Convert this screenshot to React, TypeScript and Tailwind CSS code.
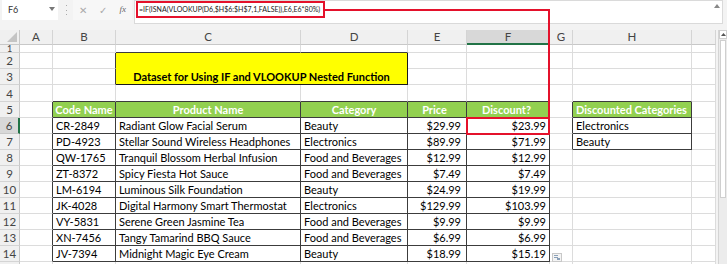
import React from "react";

const COLS = ["A", "B", "C", "D", "E", "F", "G", "H", ""];
// indices: 0=A .. 8=I
const B = 1, C = 2, D = 3, E = 4, F = 5, H = 7;

type Row = { code: string; name: string; cat: string; price: string; disc: string };
const DATA: Row[] = [
  { code: "CR-2849", name: "Radiant Glow Facial Serum", cat: "Beauty", price: "$29.99", disc: "$23.99" },
  { code: "PD-4923", name: "Stellar Sound Wireless Headphones", cat: "Electronics", price: "$89.99", disc: "$71.99" },
  { code: "QW-1765", name: "Tranquil Blossom Herbal Infusion", cat: "Food and Beverages", price: "$12.99", disc: "$12.99" },
  { code: "ZT-8372", name: "Spicy Fiesta Hot Sauce", cat: "Food and Beverages", price: "$7.49", disc: "$7.49" },
  { code: "LM-6194", name: "Luminous Silk Foundation", cat: "Beauty", price: "$24.99", disc: "$19.99" },
  { code: "JK-4028", name: "Digital Harmony Smart Thermostat", cat: "Electronics", price: "$129.99", disc: "$103.99" },
  { code: "VY-5831", name: "Serene Green Jasmine Tea", cat: "Food and Beverages", price: "$9.99", disc: "$9.99" },
  { code: "XN-7456", name: "Tangy Tamarind BBQ Sauce", cat: "Food and Beverages", price: "$6.99", disc: "$6.99" },
  { code: "JV-7394", name: "Midnight Magic Eye Cream", cat: "Beauty", price: "$18.99", disc: "$15.19" },
];

function inT(r: number, c: number) {
  if (r >= 5 && r <= 14 && c >= B && c <= F) return true;
  if (r >= 5 && r <= 7 && c === H) return true;
  if (r >= 2 && r <= 3 && c >= C && c <= D) return true;
  return false;
}

function cellContent(r: number, c: number): { text: string; align: "l" | "c" | "r"; head?: boolean } | null {
  if (r === 5) {
    const h: Record<number, string> = { 1: "Code Name", 2: "Product Name", 3: "Category", 4: "Price", 5: "Discount?", 7: "Discounted Categories" };
    if (h[c] !== undefined) return { text: h[c], align: c === H ? "l" : "c", head: true };
    return null;
  }
  if (r >= 6 && r <= 14) {
    const d = DATA[r - 6];
    if (c === B) return { text: d.code, align: "l" };
    if (c === C) return { text: d.name, align: "l" };
    if (c === D) return { text: d.cat, align: "l" };
    if (c === E) return { text: d.price, align: "r" };
    if (c === F) return { text: d.disc, align: "r" };
    if (c === H && r === 6) return { text: "Electronics", align: "l" };
    if (c === H && r === 7) return { text: "Beauty", align: "l" };
  }
  return null;
}

function Cell({ r, c }: { r: number; c: number }) {
  const rd = inT(r, c) || inT(r, c + 1);
  const bd = inT(r, c) || inT(r + 1, c);
  const content = cellContent(r, c);
  const green = r === 5 && inT(r, c);
  const last = r === 15;
  return (
    <div
      className={[
        "flex items-end overflow-visible whitespace-nowrap border-r",
        last ? "border-b-0" : "border-b",
        rd ? "border-r-[#3c3c3c]" : "border-r-[#dcdcdc]",
        bd ? "border-b-[#3c3c3c]" : "border-b-[#dcdcdc]",
        green ? "bg-[#92d050]" : "bg-white",
        content?.align === "r" ? "justify-end" : content?.align === "c" ? "justify-center" : "justify-start",
        c === F ? "pr-[3px]" : c === E ? "pr-[5px]" : "",
        content?.align === "l" ? "pl-[3px]" : "",
      ].join(" ")}
    >
      {content && (
        <span
          className={
            content.head
              ? "text-[11px] leading-[15px] font-bold text-white"
              : "text-[11px] leading-[15px] text-black"
          }
        >
          {content.text}
        </span>
      )}
    </div>
  );
}

export default function App() {
  const rows = [1, 2, 3, 4, 5, 6, 7, 8, 9, 10, 11, 12, 13, 14, 15];
  const cells: React.ReactNode[] = [];

  // header row
  cells.push(
    <div key="corner" className="relative border-r border-b border-r-[#c8c8c8] border-b-[#c8c8c8] bg-[#f0f0f0]">
      <svg className="absolute right-[2px] bottom-[2px]" width="10" height="10" viewBox="0 0 10 10">
        <polygon points="10,0 10,10 0,10" fill="#c4c4c4" />
      </svg>
    </div>
  );
  COLS.forEach((l, i) => {
    const sel = i === F;
    cells.push(
      <div
        key={"h" + i}
        className={[
          "flex items-center justify-center border-r text-[11.5px] text-[#444]",
          sel
            ? "bg-[#d8d8d8] border-b-2 border-b-[#217346] border-r-[#c8c8c8]"
            : "bg-[#f0f0f0] border-b border-b-[#c8c8c8] border-r-[#d4d4d4]",
        ].join(" ")}
      >
        {l}
      </div>
    );
  });

  rows.forEach((r) => {
    const sel = r === 6;
    cells.push(
      <div
        key={"rh" + r}
        className={[
          "flex justify-center text-[11.5px] text-[#444] overflow-hidden",
          r === 1 ? "items-start" : "items-end",
          r === 15 ? "" : "border-b",
          sel
            ? "bg-[#d8d8d8] border-r-2 border-r-[#217346] border-b-[#c8c8c8]"
            : "bg-[#f0f0f0] border-r border-r-[#c8c8c8] border-b-[#d4d4d4]",
        ].join(" ")}
      >
        {r === 1 ? (
          <span className="block h-[7px] overflow-hidden text-[9px] leading-[7px]">1</span>
        ) : r === 15 ? (
          ""
        ) : (
          <span className="leading-[15px]">{r}</span>
        )}
      </div>
    );
    for (let c = 0; c < 9; c++) {
      if (r >= 2 && r <= 3 && c >= C && c <= D) {
        if (r === 2 && c === C) {
          cells.push(
            <div
              key="title"
              className="col-start-4 col-span-2 row-start-3 row-span-2 flex items-end justify-center border-r border-b border-r-[#1a1a1a] border-b-[#1a1a1a] bg-[#ffff00]"
            >
              <span className="text-[11px] leading-[15px] font-bold text-black">
                Dataset for Using IF and VLOOKUP Nested Function
              </span>
            </div>
          );
        }
        continue;
      }
      cells.push(<Cell key={r + "-" + c} r={r} c={c} />);
    }
  });

  return (
    <div
      className="relative w-[727px] h-[264px] overflow-hidden bg-[#f3f3f3]"
      style={{ fontFamily: "Lato, 'Noto Sans', sans-serif" }}
    >
      {/* formula bar */}
      <div className="flex h-[30px] items-start">
        <div className="relative ml-[2px] mt-0 flex h-[20px] w-[56px] items-center bg-white pl-[6px] text-[9px] text-[#333]">
          F6
          <svg className="absolute right-[3px] top-[7px]" width="6" height="4" viewBox="0 0 6 4">
            <polygon points="0,0 6,0 3,4" fill="#777" />
          </svg>
        </div>
        <div className="ml-[8px] mt-[5px] flex h-[10px] flex-col justify-between">
          <span className="block h-[1px] w-[1px] bg-[#aaa]" />
          <span className="block h-[1px] w-[1px] bg-[#aaa]" />
          <span className="block h-[1px] w-[1px] bg-[#aaa]" />
        </div>
        <div className="ml-[6px] flex h-[20px] w-[59px] items-center justify-around bg-[#f7f7f7] text-[10px] text-[#aaa]">
          <span>✕</span>
          <span>✓</span>
          <span className="italic text-[#666] text-[9px]" style={{ fontFamily: "'Liberation Serif', serif" }}>fx</span>
        </div>
        <div className="relative ml-[2px] h-[24px] w-[589px] border border-[#dadada] bg-white">
          <div className="absolute left-[1px] top-0 flex h-[17px] w-[189px] items-center border-2 border-[#e4112b] pl-[1px]">
            <span className="text-[7px] text-[#222] whitespace-nowrap">
              =IF(ISNA(VLOOKUP(D6,$H$6:$H$7,1,FALSE)),E6,E6*80%)
            </span>
          </div>
          <svg className="absolute right-[2px] top-[3px]" width="6" height="4" viewBox="0 0 6 4">
            <polygon points="0,4 6,4 3,0" fill="#888" />
          </svg>
        </div>
      </div>

      {/* sheet */}
      <div className="flex">
        <div className="grid grid-cols-[20px_33px_63px_185px_107px_59px_83px_23px_119px_24px] grid-rows-[15px_8px_16px_16px_17px_16px_16px_16px_16px_16px_16px_16px_16px_16px_16px_4px] bg-white">
          {cells}
        </div>
        <div className="ml-[2px] flex w-[10px] flex-col border-l border-[#d4d4d4] bg-[#ececec]">
          <div className="flex h-[9px] items-center justify-center border border-[#cfcfcf] bg-white">
            <svg width="5" height="3" viewBox="0 0 5 3">
              <polygon points="0,3 5,3 2.5,0" fill="#555" />
            </svg>
          </div>
          <div className="mx-[1px] mt-[1px] h-[158px] border border-[#cfcfcf] bg-white" />
        </div>
      </div>

      {/* red callout lines */}
      <div className="absolute left-[324px] top-[9px] h-[2px] w-[226px] bg-[#e4112b]" />
      <div className="absolute left-[548px] top-[9px] h-[109px] w-[2px] bg-[#e4112b]" />
      <div className="absolute left-[466px] top-[117px] h-[18px] w-[84px] border-2 border-[#e4112b]" />

      {/* paste options icon */}
      <div className="absolute left-[552px] top-[253px] flex h-[9px] w-[10px] items-center justify-center border border-[#c8c8c8] bg-[#f4f4f4]">
        <svg width="6" height="5" viewBox="0 0 6 5">
          <rect x="0" y="0" width="4" height="1" fill="#8aa0b8" />
          <rect x="0" y="2" width="4" height="1" fill="#8aa0b8" />
          <rect x="3" y="3" width="3" height="2" fill="#8aa0b8" />
        </svg>
      </div>
    </div>
  );
}
